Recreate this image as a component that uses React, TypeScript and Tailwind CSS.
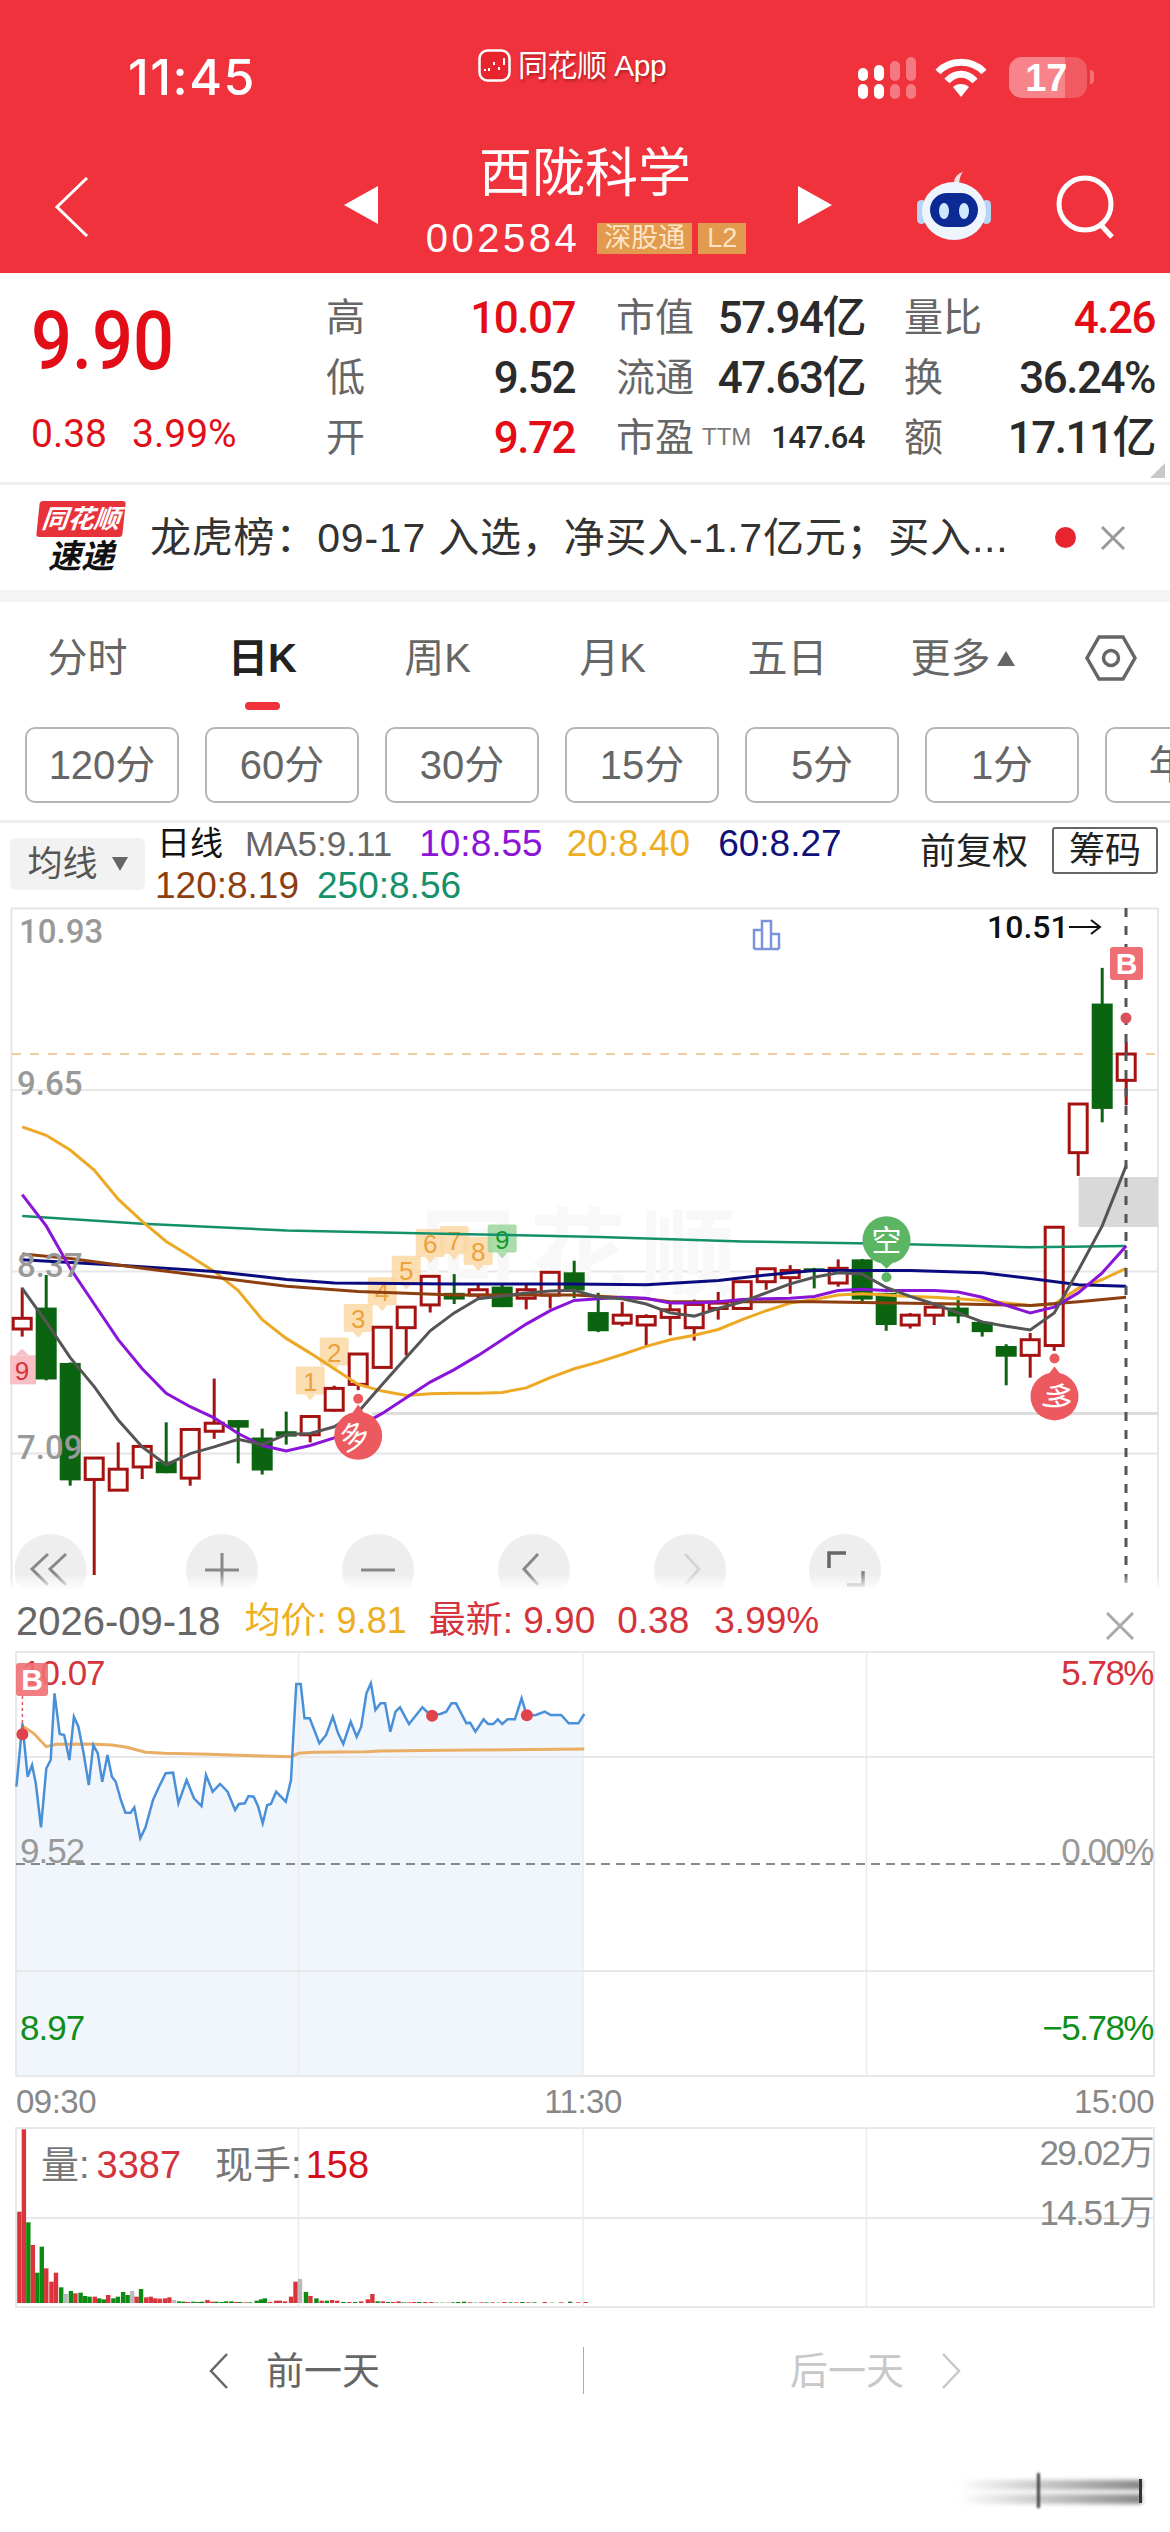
import React from "react";

const Z3 = (p: number) => p / 2.613;
const Z4 = (p: number) => 570 + p / 2.613;
const Y = (p: number) => 900 + p / 2.24;
const CX = (i: number) => 22.2 + 24 * i;
const RED = "#a51212";
const GREEN = "#0b640f";

type C = [string, number, number, number, number];
const candles: C[] = [
  ["r",868,978,937,961],["g",840,1076,913,1074],["g",1036,1312,1037,1300],["r",1248,1512,1250,1298],["r",1215,1322,1275,1322],
  ["r",1222,1297,1224,1270],["g",1170,1284,1258,1284],["r",1185,1312,1186,1295],["r",1072,1207,1172,1190],["g",1165,1262,1165,1182],
  ["g",1184,1287,1204,1278],["g",1146,1220,1190,1202],["r",1157,1215,1157,1198],["r",1088,1146,1094,1143],["r",1015,1098,1017,1085],
  ["r",955,1048,957,1047],["r",910,1020,912,958],["r",842,924,843,907],["g",838,905,880,895],["r",860,893,873,885],
  ["g",860,912,866,912],["r",862,917,873,892],["r",832,915,834,885],["g",808,892,834,875],["g",880,968,923,966],
  ["r",900,955,930,948],["r",928,998,933,952],["r",905,975,918,935],["r",895,987,906,958],["r",878,940,903,915],
  ["r",855,915,855,915],["r",825,873,826,855],["r",818,882,830,846],["g",824,870,825,832],["r",805,866,825,858],
  ["g",804,900,805,895],["g",880,965,880,952],["r",925,960,930,952],["r",905,952,912,930],["g",888,948,913,933],
  ["g",945,978,945,968],["g",995,1087,999,1023],["r",970,1070,985,1020],["r",733,1010,733,998],["r",457,618,457,566],
  ["g",152,498,232,468],["r",318,460,345,404],
];

const series = (a: number[]) => a.map((p, i) => `${CX(i).toFixed(1)},${Y(p).toFixed(1)}`).join(" ");
const ma5 = series([870,945,1025,1090,1165,1225,1265,1240,1225,1208,1220,1197,1195,1180,1147,1085,1025,965,925,893,887,880,876,874,890,893,905,925,932,915,900,880,860,845,835,838,868,888,905,925,945,955,963,925,830,730,595]);
const ma10 = series([660,730,825,905,985,1050,1105,1135,1160,1195,1222,1234,1222,1205,1180,1150,1115,1080,1052,1020,985,950,920,897,893,890,892,903,903,900,895,893,892,888,875,872,875,875,875,878,890,908,925,912,880,835,775]);
const ma20 = series([508,527,560,605,670,720,765,798,832,875,940,982,1015,1050,1085,1100,1110,1106,1105,1105,1103,1093,1070,1050,1035,1018,1000,985,975,962,940,920,903,895,885,882,885,888,890,893,897,903,908,905,870,850,825]);
const pts = (a: [number, number][]) => a.map(([x, y]) => `${x.toFixed(1)},${Y(y).toFixed(1)}`).join(" ");
const ma60 = pts([[Z3(58),806],[Z3(310),818],[Z3(560),832],[Z3(749),850],[Z3(874),858],[Z3(1188),860],[Z4(0),860],[Z4(200),862],[Z4(388),852],[Z4(513),840],[Z4(638),830],[Z4(890),830],[Z4(1078),835],[Z4(1203),848],[Z4(1329),862],[Z4(1453),865]]);
const ma120 = pts([[Z3(58),793],[Z3(184),803],[Z3(372),825],[Z3(560),845],[Z3(749),865],[Z3(936),877],[Z3(1188),885],[Z3(1500),885],[Z4(200),893],[Z4(262),900],[Z4(638),900],[Z4(1015),905],[Z4(1203),908],[Z4(1329),900],[Z4(1453),890]]);
const ma250 = pts([[Z3(58),708],[Z3(372),725],[Z3(749),740],[Z3(1188),748],[Z3(1568),755],[Z4(450),765],[Z4(827),770],[Z4(1203),778],[Z4(1453),775]]);

const priceRaw: [number, number][] = [[22,590],[30,400],[37,560],[43,525],[48,580],[55,712],[62,535],[68,510],[73,310],[80,432],[86,435],[93,510],[99,380],[105,410],[112,490],[119,585],[125,465],[131,490],[137,575],[144,495],[150,560],[155,575],[162,630],[168,668],[175,668],[180,652],[188,745],[195,712],[205,630],[213,590],[222,550],[232,548],[239,640],[250,570],[260,625],[270,648],[276,555],[285,605],[295,582],[305,605],[315,660],[320,642],[328,640],[333,618],[340,620],[346,650],[352,700],[358,645],[363,642],[370,605],[383,635],[390,570],[393,440],[397,282],[403,282],[408,385],[415,385],[428,460],[437,435],[446,380],[453,430],[460,462],[470,395],[478,440],[484,410],[491,310],[497,280],[503,360],[510,340],[516,340],[523,425],[530,365],[536,352],[548,402],[566,352],[572,365],[580,375],[590,372],[598,365],[605,340],[611,340],[625,400],[630,398],[637,425],[648,388],[654,402],[661,402],[667,388],[673,402],[680,388],[690,388],[699,325],[706,378],[718,375],[730,365],[738,375],[752,375],[762,400],[775,400],[783,372]];
const avgRaw: [number, number][] = [[30,408],[45,430],[62,470],[75,463],[120,462],[150,465],[170,472],[195,487],[220,490],[280,493],[340,497],[390,500],[400,490],[420,487],[490,485],[510,483],[600,481],[783,477]];
const IX = (p: number) => p / 1.34;
const IY = (p: number) => 1590 + p / 3;
const toI = (a: [number, number][]) => a.map(([x, y]) => `${IX(x).toFixed(1)},${IY(y).toFixed(1)}`).join(" ");

const VR = "#d9333b";
const VG = "#0d8a12";
const VS = "#bbbbbb";
const volHead: [number, number, string][] = [[26,365,VR],[32,118,VR],[38,397,VG],[44,465,VR],[50,548,VG],[56,470,VG],[62,535,VR],[69,575,VR],[75,548,VR],[82,592,VG],[88,612,VS],[95,603,VG],[101,610,VR],[108,608,VG],[114,618,VG],[120,620,VG],[127,620,VR],[133,625,VG],[139,628,VG],[145,615,VR],[152,625,VG],[158,620,VG],[165,606,VG],[171,615,VG],[177,603,VS],[183,620,VR],[189,597,VG],[196,622,VR],[202,620,VR],[208,625,VR],[214,626,VR],[221,625,VR],[227,622,VR],[233,630,VS],[240,634,VG],[246,635,VG],[252,636,VR],[259,635,VG],[265,636,VG],[271,635,VG],[278,630,VR],[284,635,VR],[290,635,VG],[297,636,VG],[303,634,VG],[310,634,VG],[316,636,VR],[322,636,VG],[329,637,VR],[335,637,VG],[344,632,VG],[350,628,VG],[355,625,VG],[362,636,VR],[370,632,VR],[375,632,VR],[382,634,VR],[390,620,VR],[396,575,VR],[402,567,VS],[410,606,VG],[416,618,VR],[424,625,VG],[431,632,VR],[438,632,VG],[445,630,VR],[452,632,VR],[460,636,VG],[468,636,VR],[476,636,VG],[484,634,VR],[493,628,VR],[499,612,VR],[506,634,VG],[513,634,VR],[520,636,VG],[527,636,VR],[534,634,VR],[541,637,VG],[548,637,VR],[555,636,VR],[562,636,VG],[570,636,VR],[578,636,VR],[585,638,VG],[592,638,VG],[600,638,VR],[607,637,VG],[614,636,VG],[622,635,VG],[630,637,VR],[637,638,VG],[645,637,VR],[652,637,VG],[660,637,VR],[668,638,VG],[676,636,VR],[684,637,VG],[692,637,VR],[700,636,VG],[708,637,VR],[716,637,VG],[730,636,VR],[740,638,VG],[752,637,VR],[764,635,VG],[775,637,VR],[785,636,VR]];

const NUM = { fontFamily: 'Roboto,"Noto Sans CJK SC",sans-serif' };

function Marker({ x, y, label, fill, color }: { x: number; y: number; label: string; fill: string; color: string }) {
  return (
    <g>
      <rect x={x - 14.5} y={y} width="29" height="28" rx="2" fill={fill} fillOpacity="0.82" />
      <path d={`M${x - 5} ${y + 28}L${x} ${y + 34}L${x + 5} ${y + 28}Z`} fill={fill} fillOpacity="0.82" />
      <text x={x} y={y + 24} textAnchor="middle" fontSize="26" fill={color}>{label}</text>
    </g>
  );
}

function Stat({ label, value, red }: { label: string; value: React.ReactNode; red?: boolean }) {
  return (
    <div className="flex h-[60px] items-center justify-between">
      <span className="text-[39px] text-[#666]">{label}</span>
      <span className={`text-[44px] font-medium tracking-[-1.5px] ${red ? "text-[#e30d17]" : "text-[#2b2b2b]"}`} style={NUM}>{value}</span>
    </div>
  );
}

export default function App() {
  return (
    <div
      className="relative h-[2532px] w-[1170px] overflow-hidden bg-white"
      style={{ fontFamily: '"Liberation Sans","Noto Sans CJK SC",sans-serif' }}
    >
      {/* Red header */}
      <header className="relative h-[273px] bg-[#f0323c] text-white">
        <div className="flex h-[136px] items-start">
          <div className="mt-[49px] ml-[128px] w-[200px] text-[50px] leading-[56px] font-medium tracking-[1.5px]" style={{ fontFamily: "Inter, sans-serif" }}>11:45</div>
          <div className="mt-[49px] ml-[150px] flex h-[33px] items-center gap-[7px]">
            <svg width="33" height="33" viewBox="0 0 33 33">
              <rect x="1.5" y="1.5" width="30" height="30" rx="8" fill="#e8242e" stroke="#fff" strokeWidth="2.5" />
              <path d="M6 22h2v-2H6zM10 19h2v3h-2zM15 13h2v3h-2zM20 18h2v3h-2zM25 9h2v7h-2z" fill="#fff" />
            </svg>
            <span className="text-[30px] leading-[34px] tracking-[-0.5px] [text-shadow:1px_2px_3px_rgba(90,0,0,0.45)]">同花顺 App</span>
          </div>
          <div className="mt-[57px] ml-[192px]">
            <svg width="60" height="42" viewBox="0 0 60 42">
              <g fill="#fff">
                <rect x="0" y="27" width="10" height="15" rx="5" />
                <rect x="0" y="11" width="10" height="13" rx="5" />
                <rect x="16" y="8" width="10" height="16" rx="5" />
                <rect x="16" y="27" width="10" height="15" rx="5" />
              </g>
              <g fill="#fff" fillOpacity="0.35">
                <rect x="32" y="4" width="10" height="20" rx="5" />
                <rect x="32" y="27" width="10" height="15" rx="5" />
                <rect x="48" y="0" width="10" height="24" rx="5" />
                <rect x="48" y="27" width="10" height="15" rx="5" />
              </g>
            </svg>
          </div>
          <div className="mt-[58px] ml-[17px]">
            <svg width="52" height="40" viewBox="0 0 52 40" fill="none" stroke="#fff" strokeLinecap="butt">
              <path d="M3 14C15 1 37 1 49 14" strokeWidth="7" />
              <path d="M12 23C20 14 32 14 40 23" strokeWidth="7" />
              <path d="M26 39l-8-10c4-4 12-4 16 0z" fill="#fff" stroke="none" />
            </svg>
          </div>
          <div className="relative mt-[57px] ml-[22px] flex h-[41px] w-[78px] items-center overflow-hidden rounded-[13px] bg-white/20">
            <div className="absolute inset-y-0 left-0 w-[56px] bg-white/25" />
            <span className="relative ml-[16px] text-[38px] leading-none font-bold">17</span>
          </div>
          <div className="mt-[70px] ml-[3px] h-[14px] w-[4px] rounded-r bg-white/30" />
        </div>
        <div className="relative flex h-[137px] justify-center">
          <div className="flex flex-col items-center">
            <div className="mt-[7px] text-[53px] leading-[62px] font-normal">西陇科学</div>
            <div className="mt-[17px] ml-[2px] flex items-center">
              <span className="text-[40px] leading-[32px] tracking-[3.5px]">002584</span>
              <span className="ml-[17px] flex h-[31px] w-[95px] items-center justify-center bg-[#e29a4e] text-[27px] leading-none text-[#fde5c5]">深股通</span>
              <span className="ml-[6px] flex h-[31px] w-[48px] items-center justify-center bg-[#e29a4e] text-[27px] leading-none text-[#fde5c5]">L2</span>
            </div>
          </div>
          <svg className="absolute top-[41px] left-[54px]" width="36" height="60" viewBox="0 0 36 60" fill="none" stroke="#fff" strokeWidth="3"><path d="M33 1L3 30l30 29" /></svg>
          <svg className="absolute top-[50px] left-[344px]" width="34" height="38" viewBox="0 0 34 38" fill="#fff"><path d="M34 0v38L0 19z" /></svg>
          <svg className="absolute top-[50px] left-[798px]" width="34" height="38" viewBox="0 0 34 38" fill="#fff"><path d="M0 0v38l34-19z" /></svg>
          <svg className="absolute top-[34px] left-[916px]" width="76" height="72" viewBox="0 0 76 72">
            <path d="M38 13c0-5 3-9 9-11-3 3-3 7-4 11z" fill="#f7dede" />
            <rect x="1" y="30" width="9" height="24" rx="4.5" fill="#b9d4f2" />
            <rect x="66" y="30" width="9" height="24" rx="4.5" fill="#b9d4f2" />
            <ellipse cx="38" cy="41" rx="32" ry="29" fill="#eef5fd" />
            <rect x="14" y="23" width="48" height="34" rx="17" fill="#0c2a94" />
            <ellipse cx="28" cy="41" rx="5" ry="8" fill="#cfe8ff" />
            <ellipse cx="48" cy="41" rx="5" ry="8" fill="#cfe8ff" />
          </svg>
          <svg className="absolute top-[39px] left-[1054px]" width="64" height="64" viewBox="0 0 64 64" fill="none" stroke="#fff" strokeWidth="5"><circle cx="31" cy="29" r="26" /><path d="M47 50l11 12" /></svg>
        </div>
      </header>

      {/* Stats */}
      <section className="relative flex h-[212px] border-b-[3px] border-[#eeeeee] pt-[15px]">
        <div className="w-[326px] pl-[31px]">
          <div className="mt-[17px] origin-left scale-x-[0.88] text-[82px] leading-[72px] font-medium text-[#e30d17]" style={NUM}>9.90</div>
          <div className="mt-[37px] flex gap-[25px] text-[39px] leading-[40px] text-[#e01019]" style={NUM}>
            <span>0.38</span>
            <span>3.99%</span>
          </div>
        </div>
        <div className="w-[249px]">
          <Stat label="高" value="10.07" red />
          <Stat label="低" value="9.52" />
          <Stat label="开" value="9.72" red />
        </div>
        <div className="ml-[41px] w-[249px]">
          <Stat label="市值" value="57.94亿" />
          <Stat label="流通" value="47.63亿" />
          <div className="flex h-[60px] items-center justify-between">
            <span className="text-[39px] text-[#666]">市盈<span className="relative -top-[6px] ml-[8px] text-[24px] text-[#777]">TTM</span></span>
            <span className="text-[31px] font-medium tracking-[-0.5px] text-[#2b2b2b]" style={NUM}>147.64</span>
          </div>
        </div>
        <div className="ml-[39px] w-[251px]">
          <Stat label="量比" value="4.26" red />
          <Stat label="换" value="36.24%" />
          <Stat label="额" value="17.11亿" />
        </div>
        <div className="absolute right-[5px] bottom-[4px] h-0 w-0 border-b-[15px] border-l-[15px] border-b-[#c8c8c8] border-l-transparent" />
      </section>

      {/* News */}
      <section className="flex h-[105px] items-center">
        <div className="ml-[35px] flex w-[92px] flex-col items-center">
          <div className="flex h-[36px] w-[86px] -skew-x-6 items-center justify-center rounded-[3px] bg-[#e8323a] text-[26px] leading-none font-bold whitespace-nowrap text-white italic">同花顺</div>
          <div className="mt-[3px] text-[33px] leading-[34px] font-bold text-[#111] italic">速递</div>
        </div>
        <div className="ml-[23px] w-[862px] text-[41px] leading-[46px] tracking-[0.8px] whitespace-nowrap text-[#333]">龙虎榜：09-17 入选，净买入-1.7亿元；买入...</div>
        <div className="ml-[43px] h-[21px] w-[21px] flex-none rounded-full bg-[#e8242e]" />
        <svg className="ml-[24px] flex-none" width="26" height="26" viewBox="0 0 26 26" fill="none" stroke="#999" strokeWidth="3"><path d="M2 2l22 22M24 2L2 24" /></svg>
      </section>
      <div className="h-[12px] bg-[#f5f5f5]" />

      {/* Tabs */}
      <nav className="relative flex h-[125px] items-start pt-[33px] text-[40px] leading-[46px] text-[#666]">
        <div className="w-[175px] text-center">分时</div>
        <div className="w-[175px] text-center font-bold text-[#222]">日K</div>
        <div className="w-[175px] text-center">周K</div>
        <div className="w-[175px] text-center">月K</div>
        <div className="w-[175px] text-center">五日</div>
        <div className="flex w-[175px] items-center justify-center gap-[6px]">更多<span className="h-0 w-0 border-x-[9px] border-b-[15px] border-x-transparent border-b-[#666]" /></div>
        <svg className="ml-[35px]" width="52" height="46" viewBox="0 0 52 46" fill="none" stroke="#666" strokeWidth="3.5"><path d="M14 2h24l12 21-12 21H14L2 23z" /><circle cx="26" cy="23" r="7.5" /></svg>
        <div className="absolute top-[100px] left-[245px] h-[8px] w-[35px] rounded-full bg-[#f0323c]" />
      </nav>

      {/* Period buttons */}
      <div className="flex h-[76px] gap-[26px] overflow-hidden pl-[25px] text-[40px] text-[#666]">
        {["120分", "60分", "30分", "15分", "5分", "1分"].map((t) => (
          <div key={t} className="flex h-[76px] w-[154px] flex-none items-center justify-center rounded-[10px] border-2 border-[#b5b5b5]">{t}</div>
        ))}
        <div className="flex h-[76px] w-[154px] flex-none items-center justify-center rounded-[10px] border-2 border-[#b5b5b5]">年K</div>
      </div>
      <div className="mt-[17px] h-[3px] bg-[#eeeeee]" />

      {/* MA legend */}
      <div className="relative flex h-[82px]">
        <div className="mt-[15px] ml-[10px] flex h-[52px] w-[135px] flex-none items-center justify-center gap-[14px] rounded-[6px] bg-[#f2f2f2] text-[35px] text-[#555]">
          均线<span className="h-0 w-0 border-x-[8px] border-t-[14px] border-x-transparent border-t-[#666]" />
        </div>
        <div className="w-[750px] text-[37px] leading-[42px]">
          <div className="ml-[12px] flex items-center whitespace-nowrap">
            <span className="text-[33px] text-[#111]">日线</span>
            <span className="ml-[22px] text-[35px] text-[#666]">MA5:9.11</span>
            <span className="ml-[27px] text-[#8a14d8]">10:8.55</span>
            <span className="ml-[24px] text-[#edae22]">20:8.40</span>
            <span className="ml-[28px] text-[#10107a]">60:8.27</span>
          </div>
          <div className="ml-[10px] whitespace-nowrap">
            <span className="text-[#8d3f10]">120:8.19</span>
            <span className="ml-[18px] text-[#14906a]">250:8.56</span>
          </div>
        </div>
        <div className="absolute top-[8px] left-[920px] text-[36px] leading-[42px] text-[#222]">前复权</div>
        <div className="absolute top-[4px] left-[1052px] flex h-[47px] w-[106px] items-center justify-center rounded-[3px] border-2 border-[#666] text-[36px] text-[#222]">筹码</div>
      </div>

      {/* K-line chart */}
      <section className="relative h-[685px] overflow-hidden">
        <svg className="block" width="1170" height="685" viewBox="0 905 1170 685">
          <defs>
            <linearGradient id="fade" x1="0" y1="0" x2="0" y2="1">
              <stop offset="0" stopColor="#fff" stopOpacity="0" />
              <stop offset="1" stopColor="#fff" stopOpacity="1" />
            </linearGradient>
          </defs>
          <path d="M11.5 1590V908.5H1158V1590" fill="none" stroke="#e6e6e6" strokeWidth="2" />
          {[1090, 1271.5, 1453.5].map((y) => (
            <path key={y} d={`M12 ${y}H1158`} stroke="#e6e6e6" strokeWidth="2" />
          ))}
          <path d="M372 1413.5H1158" stroke="#dddddd" strokeWidth="3" />
          <path d="M12 1054H1158" stroke="#eebd86" strokeWidth="1.5" strokeDasharray="9 9" />
          <text x="420" y="1288" fontSize="96" fontWeight="700" fill="#f8f8f8" letterSpacing="14">同花顺</text>
          <rect x="1078.6" y="1177" width="79.4" height="50" fill="#d9d9d9" />

          {/* Markers */}
          {[["1",12],["2",13],["3",14],["4",15],["5",16],["6",17],["7",18],["8",19]].map(([t, i]) => {
            const tops: Record<string, number> = { "1": 1045, "2": 980, "3": 905, "4": 845, "5": 797, "6": 737, "7": 730, "8": 755 };
            return <Marker key={String(t)} x={CX(Number(i))} y={Y(tops[String(t)])} label={String(t)} fill="#fbd7a2" color="#eba23a" />;
          })}
          <Marker x={CX(20)} y={Y(727)} label="9" fill="#98d69a" color="#159a2a" />
          <rect x="10" y={Y(1020)} width="26" height="29" fill="#f8c0c4" />
          <path d={`M15 ${Y(1020)}L22 ${Y(1005)}L29 ${Y(1020)}Z`} fill="#f8c0c4" />
          <text x="22" y={Y(1020) + 25} textAnchor="middle" fontSize="26" fill="#d8323c">9</text>

          {/* Candles */}
          {candles.map(([k, wt, wb, bt, bb], i) => {
            const x = CX(i);
            const col = k === "r" ? RED : GREEN;
            return (
              <g key={i}>
                <path d={`M${x} ${Y(wt)}V${Y(wb)}`} stroke={col} strokeWidth="3" />
                {k === "r" ? (
                  <rect x={x - 9} y={Y(bt)} width="18" height={Y(bb) - Y(bt)} fill="#fff" stroke={col} strokeWidth="3" />
                ) : (
                  <rect x={x - 10.5} y={Y(bt)} width="21" height={Math.max(Y(bb) - Y(bt), 3)} fill={col} />
                )}
              </g>
            );
          })}

          {/* Moving averages */}
          <polyline points={ma250} fill="none" stroke="#14906a" strokeWidth="2.5" />
          <polyline points={ma20} fill="none" stroke="#eda924" strokeWidth="3" />
          <polyline points={ma60} fill="none" stroke="#0b0b80" strokeWidth="3" />
          <polyline points={ma120} fill="none" stroke="#8d3f10" strokeWidth="3" />
          <polyline points={ma10} fill="none" stroke="#8a14d8" strokeWidth="3" />
          <polyline points={ma5} fill="none" stroke="#555555" strokeWidth="3" />

          {/* Signal pins */}
          <circle cx={CX(14)} cy={Y(1117)} r="5" fill="#ec5a60" />
          <circle cx={CX(14)} cy={Y(1200)} r="24" fill="#ec5a60" />
          <path d={`M${CX(14) - 7} ${Y(1153)}L${CX(14)} ${Y(1130)}L${CX(14) + 7} ${Y(1153)}Z`} fill="#ec5a60" />
          <text x="0" y="0" transform={`translate(${CX(14)} ${Y(1200) + 11}) rotate(-20)`} textAnchor="middle" fontSize="30" fill="#fff">多</text>
          <circle cx={Z4(1266)} cy={Y(1027)} r="5" fill="#ec5a60" />
          <circle cx={Z4(1266)} cy={Y(1112)} r="24" fill="#ec5a60" />
          <path d={`M${Z4(1266) - 7} ${Y(1065)}L${Z4(1266)} ${Y(1045)}L${Z4(1266) + 7} ${Y(1065)}Z`} fill="#ec5a60" />
          <text x="0" y="0" transform={`translate(${Z4(1266)} ${Y(1112) + 11}) rotate(20)`} textAnchor="middle" fontSize="30" fill="#fff">多</text>
          <circle cx={Z4(827)} cy={Y(762)} r="24" fill="#5cb562" />
          <path d={`M${Z4(827) - 8} ${Y(808)}L${Z4(827)} ${Y(826)}L${Z4(827) + 8} ${Y(808)}Z`} fill="#5cb562" />
          <circle cx={Z4(827)} cy={Y(845)} r="5" fill="#5cb562" />
          <text x={Z4(827)} y={Y(762) + 11} textAnchor="middle" fontSize="30" fill="#fff">空</text>

          {/* Cursor */}
          <path d="M1126 908V1590" stroke="#555" strokeWidth="3" strokeDasharray="9 9" />
          <rect x="1110" y="947" width="33" height="33" rx="3" fill="#ee7076" />
          <text x="1126.5" y="974" textAnchor="middle" fontSize="30" fontWeight="700" fill="#fff">B</text>
          <circle cx="1126" cy="1018" r="5.5" fill="#d9535b" />

          {/* Pillar icon */}
          <path d="M754 949V930h8V949M762 949V921h9V949M771 949V934h8V949M754 949H779" fill="none" stroke="#7b93dc" strokeWidth="2.5" />
          <text x="987" y="938" fontSize="32" fontWeight="500" fill="#111" style={NUM}>10.51</text>
          <path d="M1069 927h31M1091 920l9 7-9 7" fill="none" stroke="#111" strokeWidth="2" />

          {/* Grid labels */}
          <g fontSize="33" fontWeight="500" fill="#999" style={NUM}>
            <text x="19" y="943">10.93</text>
            <text x="17" y="1095">9.65</text>
            <text x="17" y="1277">8.37</text>
            <text x="17" y="1459">7.09</text>
          </g>

          {/* Chart buttons */}
          {[50.5, 222, 378, 534, 690, 845].map((x) => (
            <circle key={x} cx={x} cy="1570" r="36" fill="#ebebeb" fillOpacity="0.85" />
          ))}
          <g fill="none" stroke="#888" strokeWidth="3">
            <path d="M48 1554l-16 15 16 16M66 1554l-16 15 16 16" />
            <path d="M205 1570h34M222 1553v34" />
            <path d="M361 1570h34" />
            <path d="M538 1554l-14 15 14 16" />
            <path d="M685 1554l14 15-14 16" stroke="#d5d5d5" />
            <path d="M829 1568v-15h17" strokeWidth="3.5" stroke="#666" />
            <path d="M847 1585h16v-14" strokeWidth="3.5" stroke="#888" />
          </g>
          <rect x="0" y="1574" width="1170" height="16" fill="url(#fade)" />
        </svg>
      </section>

      {/* Intraday header */}
      <div className="relative flex h-[61px] items-center pl-[16px] text-[37px] leading-none">
        <span className="text-[40px] text-[#666]">2026-09-18</span>
        <span className="ml-[24px] text-[36px] text-[#edae22]">均价: 9.81</span>
        <span className="ml-[22px] text-[#d5333c]">最新: 9.90</span>
        <span className="ml-[22px] text-[#d5333c]">0.38</span>
        <span className="ml-[25px] text-[#d5333c]">3.99%</span>
        <svg className="absolute top-[22px] left-[1105px]" width="30" height="28" viewBox="0 0 30 28" fill="none" stroke="#aaa" strokeWidth="3"><path d="M2 1l26 26M28 1L2 27" /></svg>
      </div>

      {/* Intraday chart */}
      <section className="relative h-[426px]">
        <svg className="block" width="1170" height="426" viewBox="0 1651 1170 426">
          <rect x="16" y="1651" width="567" height="426" fill="#f1f6fc" />
          <polygon points={`16,1651 16,1790 ${toI(priceRaw)} 583,1714 583,1651`} fill="#fff" />
          <path d="M16 1652H1154M16 2076H1154M1154 1651V2077M16 1651V2077" fill="none" stroke="#e8e8e8" strokeWidth="2" />
          <path d="M16 1757H1154M16 1971H1154" stroke="#e8e8e8" strokeWidth="2" />
          <path d="M298.5 1651V2077M583 1651V2077M866.5 1651V2077" stroke="#ebebeb" strokeWidth="1.5" />
          <path d="M16 1864H1154" stroke="#666" strokeWidth="1.5" strokeDasharray="9 6" />
          <polyline points={toI(avgRaw)} fill="none" stroke="#e9ad63" strokeWidth="3" />
          <polyline points={toI(priceRaw)} fill="none" stroke="#4a90d9" strokeWidth="2.5" />
          <path d={`M${IX(30)} 1696V${IY(433)}`} stroke="#e35a62" strokeWidth="1.5" strokeDasharray="3 3" />
          {[[30, 433], [579, 377], [706, 376]].map(([x, y]) => (
            <circle key={x} cx={IX(x)} cy={IY(y)} r="6" fill="#e0434c" />
          ))}
        </svg>
        <span className="absolute top-[4px] left-[22px] text-[35px] leading-[36px] tracking-[-1px] text-[#d5333c]">10.07</span>
        <div className="absolute top-[12px] left-[16px] flex h-[33px] w-[32px] items-center justify-center rounded-[3px] bg-[#ee7076]/90 text-[30px] font-bold text-white">B</div>
        <span className="absolute top-[4px] right-[17px] text-[35px] leading-[36px] tracking-[-1.5px] text-[#d5333c]">5.78%</span>
        <span className="absolute top-[182px] left-[20px] text-[35px] leading-[36px] tracking-[-1px] text-[#999]">9.52</span>
        <span className="absolute top-[182px] right-[17px] text-[35px] leading-[36px] tracking-[-1.5px] text-[#999]">0.00%</span>
        <span className="absolute top-[359px] left-[20px] text-[35px] leading-[36px] tracking-[-1px] text-[#0f8f1a]">8.97</span>
        <span className="absolute top-[359px] right-[17px] text-[35px] leading-[36px] tracking-[-1.5px] text-[#0f8f1a]">−5.78%</span>
      </section>

      {/* Time axis */}
      <div className="relative h-[50px] text-[33px] leading-[50px] tracking-[-0.5px] text-[#888]">
        <span className="absolute top-0 left-[16px]">09:30</span>
        <span className="absolute top-0 left-[583px] -translate-x-1/2">11:30</span>
        <span className="absolute top-0 right-[16px]">15:00</span>
      </div>

      {/* Volume chart */}
      <section className="relative h-[181px]">
        <svg className="block" width="1170" height="181" viewBox="0 2127 1170 181">
          <path d="M16 2128H1154V2307H16Z" fill="none" stroke="#e8e8e8" strokeWidth="2" />
          <path d="M16 2218H1154" stroke="#e8e8e8" strokeWidth="2" />
          <path d="M298.5 2127V2308M583 2127V2308M866.5 2127V2308" stroke="#ebebeb" strokeWidth="1.5" />
          {volHead.map(([x, t, c], i) => (
            <rect key={i} x={IX(x) - 2.2} y={2090 + t / 3} width="4.4" height={2303 - (2090 + t / 3)} fill={c} />
          ))}
        </svg>
        <div className="absolute top-[18px] left-[41px] flex text-[38px] leading-[40px] text-[#777]">
          <span>量:</span><span className="ml-[7px] text-[#d5333c]">3387</span>
          <span className="ml-[34px]">现手:</span><span className="ml-[4px] text-[#d5101a]">158</span>
        </div>
        <span className="absolute top-[6px] right-[17px] text-[35px] leading-[40px] tracking-[-1.5px] text-[#888]">29.02万</span>
        <span className="absolute top-[66px] right-[17px] text-[35px] leading-[40px] tracking-[-1.5px] text-[#888]">14.51万</span>
      </section>

      {/* Day switch */}
      <div className="mt-[39px] flex h-[47px] items-center text-[38px] leading-none">
        <div className="flex w-[583px] items-center justify-end pr-[203px] text-[#666]">
          <svg className="mr-[36px]" width="22" height="38" viewBox="0 0 22 38" fill="none" stroke="#666" strokeWidth="2.5"><path d="M19 2L3 19l16 17" /></svg>
          前一天
        </div>
        <div className="h-[47px] w-[1px] bg-[#aaa]" />
        <div className="flex items-center pl-[206px] text-[#c8c8c8]">
          后一天
          <svg className="ml-[36px]" width="22" height="38" viewBox="0 0 22 38" fill="none" stroke="#c8c8c8" strokeWidth="2.5"><path d="M3 2l16 17L3 36" /></svg>
        </div>
      </div>

      {/* Blurred remnant at the foot */}
      <div className="absolute top-[2473px] left-[955px] h-[35px] w-[187px]">
        <div className="absolute top-[7px] right-0 h-[10px] w-[185px] bg-gradient-to-r from-transparent to-[#888] blur-[2px]" />
        <div className="absolute top-[21px] right-0 h-[10px] w-[185px] bg-gradient-to-r from-transparent to-[#888] blur-[2px]" />
        <div className="absolute top-0 left-[82px] h-[35px] w-[3px] bg-[#444] blur-[1px]" />
        <div className="absolute top-[6px] right-0 h-[24px] w-[3px] bg-[#333]" />
      </div>
    </div>
  );
}
